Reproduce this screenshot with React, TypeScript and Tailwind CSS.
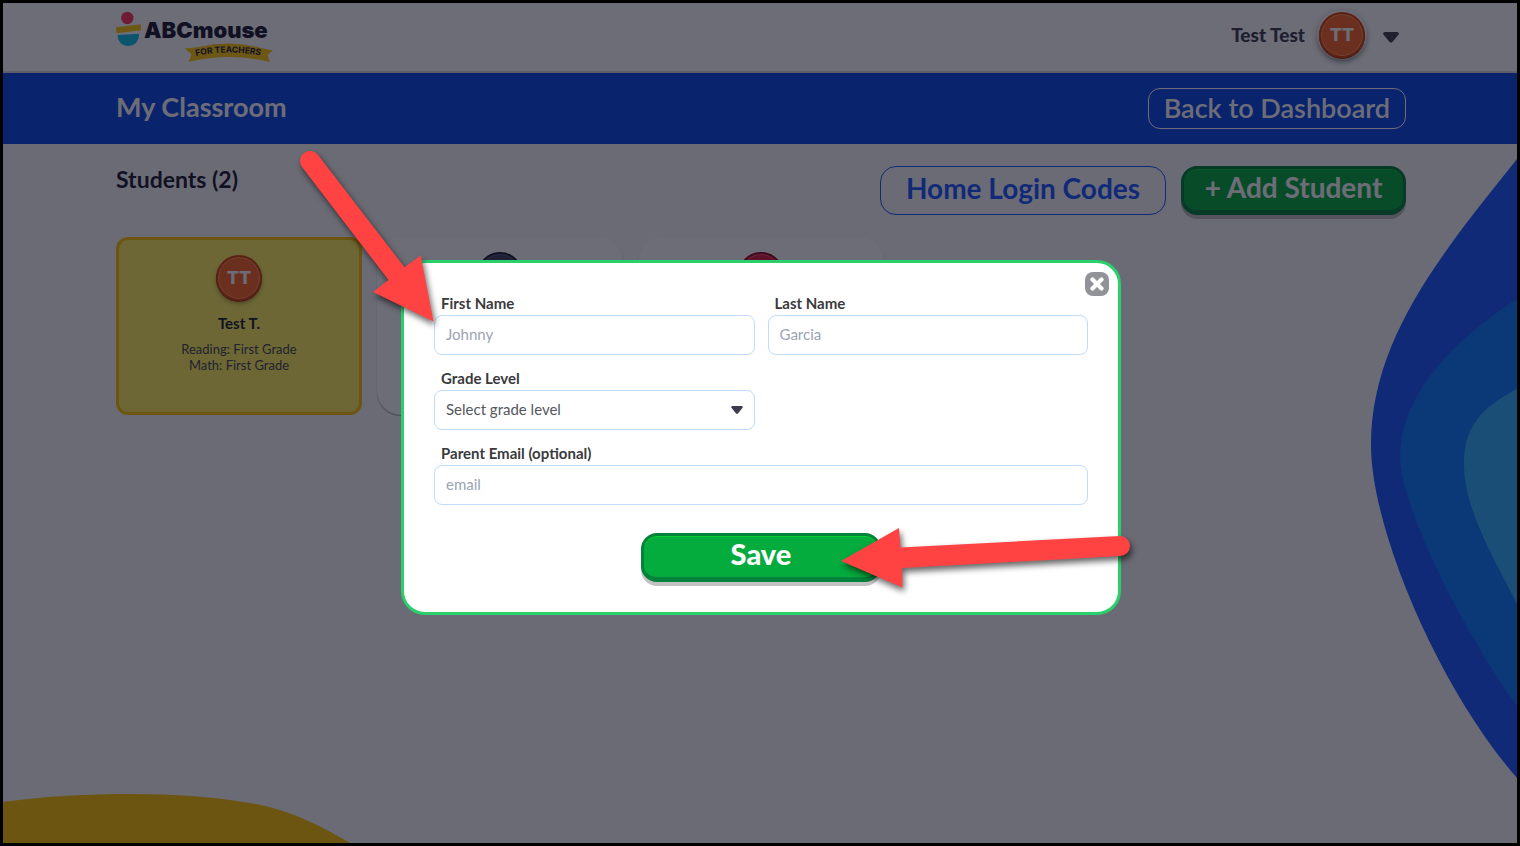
import React, { useState } from 'react';

interface Student {
  id: number;
  name: string;
  initials: string;
  reading: string;
  math: string;
  color: 'orange' | 'navy' | 'red';
}

const STUDENTS: Student[] = [
  { id: 1, name: 'Test T.', initials: 'TT', reading: 'First Grade', math: 'First Grade', color: 'orange' },
  { id: 2, name: '', initials: '', reading: '', math: '', color: 'navy' },
  { id: 3, name: '', initials: '', reading: '', math: '', color: 'red' },
];

const GRADES = ['Pre-K', 'Kindergarten', 'First Grade', 'Second Grade'];

const AVATAR_COLORS = {
  orange: 'bg-[#f96524] border-[#d8400c] shadow-[inset_0_0_0_1px_#ff9a50,0_1px_0_#a83408,0_3px_4px_rgba(0,0,0,0.3)]',
  navy: 'bg-[#3c3c5c] border-[#1c1c34] shadow-[inset_0_0_0_1px_#5c5c7c,0_1px_0_#14142a]',
  red: 'bg-[#d81c3c] border-[#8c0820] shadow-[inset_0_0_0_1px_#ff5070,0_1px_0_#700018]',
};

const greenButton =
  'rounded-2xl border-3 border-b-5 border-[#02823a] bg-[#04ab3d] text-white shadow-[inset_0_1px_0_#04d032,0_4px_0_rgba(60,50,60,0.3)]';

const labelStyle = 'block px-[7px] pb-0.5 text-[15px] leading-5 font-bold';

const fieldStyle =
  'h-10 w-full rounded-lg border border-[#bfdbfe] bg-white px-[11px] pb-0.5 text-[15px] text-[#55565c] outline-none placeholder:text-[#9ba3b4]';

const Caret: React.FC<{ className: string }> = ({ className }) => (
  <svg viewBox="0 0 16 11" className={className} aria-hidden="true">
    <path d="M2 0h12c1.600 0 2.400 1.600 1.400 2.800L9.600 9.800c-.9 1.100-2.300 1.100-3.200 0L.6 2.800C-.4 1.600.4 0 2 0Z" fill="currentColor" />
  </svg>
);

const Logo = () => (
  <svg viewBox="114 10 160 54" className="h-[54px] w-[160px]" role="img" aria-label="ABCmouse for Teachers">
    <circle cx="127.300" cy="18" r="6.200" fill="#ff365c" />
    <path d="M116 27.300 141 24.300V30.200L116.500 33.200Z" fill="#ffc80a" />
    <path d="M117.500 35 139 33.700C139.500 41 134.500 46 128 46 122 46 117.800 41.500 117.500 35Z" fill="#0ac4ec" />
    <text x="144" y="38" fontSize="22" fontFamily="Inter, sans-serif" fontWeight="900" className="fill-[#1a1a2e]">ABCmouse</text>
    <path d="M185 48.500 199 47Q229 40 259 47.500L273 50.500 267.500 55 270 62Q229 52 188.500 62L191.500 54.500Z" fill="#ffc80a" />
    <path id="ribbon" d="M196 56Q229 48.500 268 57" fill="none" />
    <text fontSize="8.500" fontFamily="Inter, sans-serif" fontWeight="700" className="fill-[#1a1a2e]">
      <textPath href="#ribbon">FOR TEACHERS</textPath>
    </text>
  </svg>
);

const Avatar: React.FC<{ initials: string; color: Student['color'] }> = ({ initials, color }) => (
  <div className={`flex h-[46px] w-[46px] items-center justify-center rounded-full border-2 font-['Inter',sans-serif] text-lg font-extrabold text-white ${AVATAR_COLORS[color]}`}>
    {initials}
  </div>
);

const StudentCard: React.FC<{ student: Student; selected: boolean }> = ({ student, selected }) => (
  <li
    className={`flex h-[178px] w-[246px] flex-col items-center text-center ${
      selected ? 'rounded-xl border-3 border-[#ffc400] bg-[#fcf158] pt-[15px]' : 'rounded-3xl bg-white pt-[15px] shadow-[0_1px_1px_rgba(0,0,0,0.4)]'
    }`}
  >
    <Avatar initials={student.initials} color={student.color} />
    {student.name && (
      <>
        <h3 className="mt-3 text-[15px] leading-5 font-bold">{student.name}</h3>
        <p className="mt-2 text-[13px] leading-4 text-[#44444c]">
          Reading: {student.reading}
          <br />
          Math: {student.math}
        </p>
      </>
    )}
  </li>
);

const Backdrop = () => (
  <>
    <svg viewBox="1367 144 150 656" className="absolute top-[141px] right-0 h-[656px] w-[150px]" aria-hidden="true">
      <path d="M1517 159C1440 255 1371 340 1371 445C1371 530 1440 690 1517 778Z" fill="#1958ff" />
      <path d="M1517 299C1458 337 1400 392 1400 458C1400 500 1455 620 1517 706Z" fill="#0c7afc" />
      <path d="M1517 389C1480 408 1464 428 1464 464C1464 510 1495 560 1517 604Z" fill="#34b1ff" />
    </svg>
    <svg viewBox="3 790 350 53" className="absolute bottom-0 left-0 h-[53px] w-[350px]" aria-hidden="true">
      <path d="M3 802C45 796 90 794 130 794C175 794 215 797 250 803C290 809 325 828 350 843H3Z" fill="#fcc100" />
    </svg>
  </>
);

const AddStudentModal: React.FC<{ onClose: () => void }> = ({ onClose }) => {
  const [form, setForm] = useState({ firstName: '', lastName: '', grade: '', email: '' });

  const handleSubmit = (e: React.FormEvent) => {
    e.preventDefault();
    onClose();
  };

  return (
    <div className="absolute inset-0 flex items-start justify-center bg-[#0c0c1c]/60 pt-[257px] pl-0.5">
      <div className="relative w-full max-w-[720px]" role="dialog" aria-label="Add Student">
        <form onSubmit={handleSubmit} className="rounded-3xl border-3 border-[#2bcf6c] bg-white px-[30px] pt-[30px] pb-[30px] text-[#3a3a3c]">
          <div className="grid grid-cols-2 gap-x-[13px] gap-y-[13px]">
            <div>
              <label htmlFor="firstName" className={labelStyle}>First Name</label>
              <input
                id="firstName"
                type="text"
                placeholder="Johnny"
                className={fieldStyle}
                value={form.firstName}
                onChange={(e) => setForm({ ...form, firstName: e.target.value })}
              />
            </div>
            <div>
              <label htmlFor="lastName" className={labelStyle}>Last Name</label>
              <input
                id="lastName"
                type="text"
                placeholder="Garcia"
                className={fieldStyle}
                value={form.lastName}
                onChange={(e) => setForm({ ...form, lastName: e.target.value })}
              />
            </div>
            <div>
              <label htmlFor="grade" className={labelStyle}>Grade Level</label>
              <div className="relative">
                <select
                  id="grade"
                  className={`appearance-none ${fieldStyle}`}
                  value={form.grade}
                  onChange={(e) => setForm({ ...form, grade: e.target.value })}
                >
                  <option value="">Select grade level</option>
                  {GRADES.map((g) => (
                    <option key={g} value={g}>{g}</option>
                  ))}
                </select>
                <Caret className="pointer-events-none absolute top-4 right-3 h-2 w-3 text-[#3c3c4c]" />
              </div>
            </div>
            <div className="col-span-2">
              <label htmlFor="email" className={labelStyle}>Parent Email (optional)</label>
              <input
                id="email"
                type="email"
                placeholder="email"
                className={fieldStyle}
                value={form.email}
                onChange={(e) => setForm({ ...form, email: e.target.value })}
              />
            </div>
          </div>
          <button type="submit" className={`mx-auto mt-7 block h-[49px] w-60 pb-1.5 text-[29px] leading-none font-black ${greenButton}`}>
            Save
          </button>
        </form>

        <button
          type="button"
          onClick={onClose}
          aria-label="Close"
          className="absolute top-3 right-3 flex h-6 w-6 items-center justify-center rounded-lg bg-[#929299]"
        >
          <svg viewBox="0 0 14 14" className="h-[14px] w-[14px]" aria-hidden="true">
            <path d="M2.500 2.500 11.500 11.500M11.500 2.500 2.500 11.500" stroke="#fff" strokeWidth="4.200" strokeLinecap="round" />
          </svg>
        </button>

        {/* Guide arrows */}
        <svg viewBox="290 140 160 200" className="pointer-events-none absolute -top-[120px] -left-[111px] h-[200px] w-[160px] drop-shadow-[2px_4px_3px_rgba(0,0,0,0.6)]" aria-hidden="true">
          <path d="M318 155 404.500 267.300 420.700 255.500 433.500 321.500 373 292 388.500 280 302 167A10 10 0 0 1 318 155Z" fill="#ff4343" />
        </svg>
        <svg viewBox="830 520 310 80" className="pointer-events-none absolute top-[260px] left-[429px] h-[80px] w-[310px] drop-shadow-[2px_4px_3px_rgba(0,0,0,0.6)]" aria-hidden="true">
          <path d="M1120 536 900.500 547.500 899 528 841 561 902.500 587.500 902 568 1120 556A10 10 0 0 0 1120 536Z" fill="#ff4343" />
        </svg>
      </div>
    </div>
  );
};

const App: React.FC = () => {
  const [isModalOpen, setIsModalOpen] = useState(true);

  return (
    <div className="relative flex min-h-screen flex-col overflow-hidden border-3 border-black bg-[#fafafa] font-[Lato,sans-serif] text-[#1a1a2e]">
      <Backdrop />

      <header className="relative border-b-2 border-[#dcdad8] bg-white">
        <div className="mx-auto flex h-[68px] w-full max-w-[1292px] items-center justify-between pl-0.5">
          <a href="#" className="-ml-0.5">
            <Logo />
          </a>
          <button type="button" className="flex items-center pb-1 text-[19px] leading-5 font-black text-[#3c3c4c]">
            Test Test
            <span className="mr-4 ml-3 rounded-full bg-white p-0.5 shadow-[0_2px_6px_rgba(0,0,0,0.3)]">
              <Avatar initials="TT" color="orange" />
            </span>
            <Caret className="mt-1 mr-[7px] h-[11px] w-4" />
          </button>
        </div>
      </header>

      <div className="relative bg-[#0846e6] text-white">
        <div className="mx-auto flex h-[71px] w-full max-w-[1292px] items-center justify-between pl-0.5">
          <h1 className="pb-1 text-[27px] leading-8 font-bold">My Classroom</h1>
          <a href="#" className="rounded-xl border border-white px-[15px] pt-0.5 pb-1 text-[27px] leading-[33px] font-semibold">
            Back to Dashboard
          </a>
        </div>
      </div>

      <main className="relative mx-auto w-full max-w-[1292px] pt-[22px] pl-0.5">
        <div className="flex items-start justify-between">
          <h2 className="text-[23px] leading-[26px] font-bold">Students (2)</h2>
          <div className="flex gap-[15px]">
            <button type="button" className="h-[49px] w-[286px] rounded-2xl border border-[#1958ff] pb-1.5 text-[28px] leading-none font-bold text-[#1958ff]">
              Home Login Codes
            </button>
            <button type="button" onClick={() => setIsModalOpen(true)} className={`h-[49px] w-[225px] pb-1.5 text-[28px] leading-none font-bold ${greenButton}`}>
              + Add Student
            </button>
          </div>
        </div>

        <ul className="mt-[22px] flex flex-wrap gap-[15px]">
          {STUDENTS.map((s) => (
            <StudentCard key={s.id} student={s} selected={s.id === 1} />
          ))}
        </ul>
      </main>

      {isModalOpen && <AddStudentModal onClose={() => setIsModalOpen(false)} />}
    </div>
  );
};

export default App;
